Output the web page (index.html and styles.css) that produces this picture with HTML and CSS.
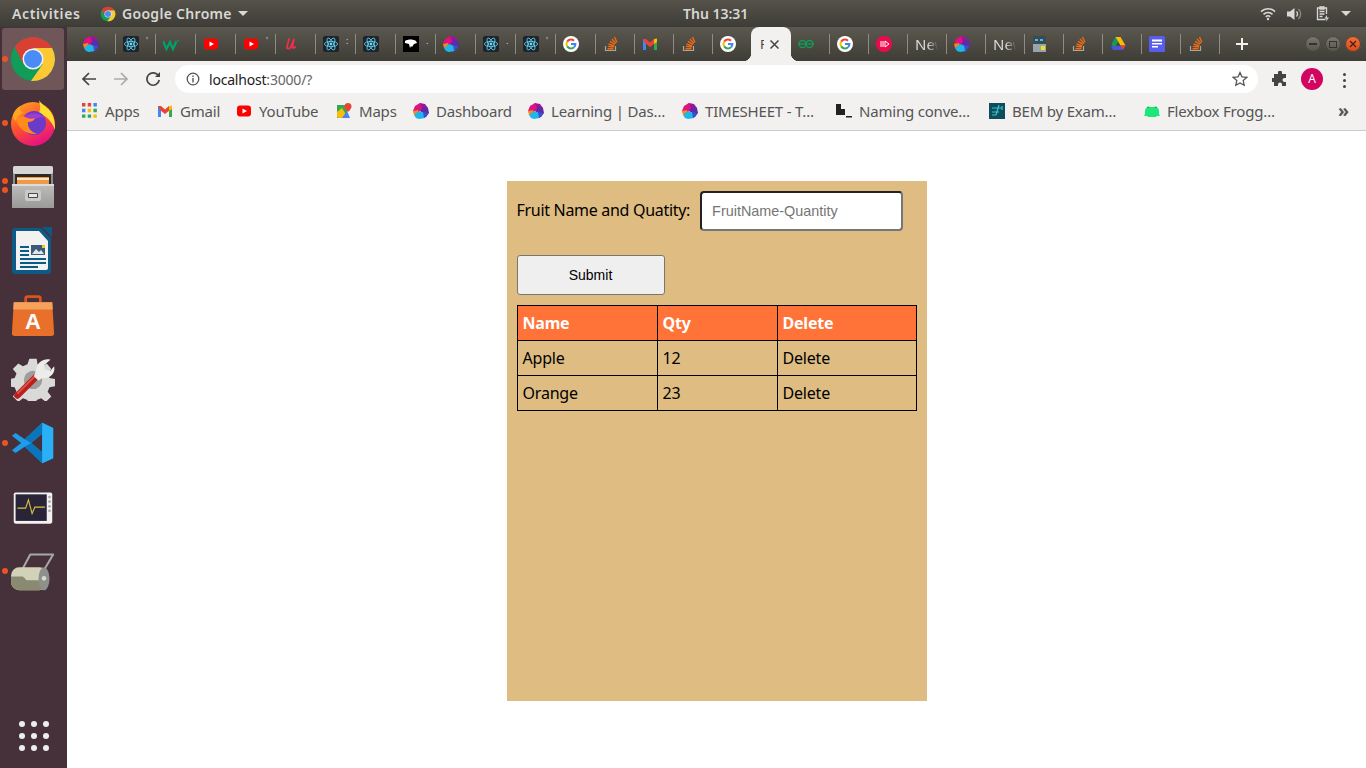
FILE: index.html
```html
<!DOCTYPE html>
<html>
<head>
  <title>Fruit list</title>
  <link rel="stylesheet" href="styles.css">
</head>
<body>
  <!-- shared favicons -->
  <svg class="sprite" width="0" height="0">
    <symbol id="gem" viewBox="0 0 16 16">
      <path fill="#a5129a" d="M7 0 12 1 15 5 15 10 8 9 4 4z"/>
      <path fill="#5a2ca8" d="M9 3 15 5 16 10 13 14 9 9z"/>
      <path fill="#e0127e" d="M2 3 7 0 9 5 6 9 0 8z"/>
      <path fill="#f7861c" d="M0 8 5 7 6 11 1 12z"/>
      <path fill="#1fb6e8" d="M1 12 6 8 11 10 12 15 6 16 3 15z"/>
      <path fill="#3a4fd0" d="M10 9 15 10 13 14 11 15z"/>
    </symbol>
    <symbol id="react" viewBox="0 0 16 16">
      <rect width="16" height="16" rx="2" fill="#20232a"/>
      <g fill="none" stroke="#61dafb" stroke-width=".8">
        <ellipse cx="8" cy="8" rx="6.6" ry="2.6"/>
        <ellipse cx="8" cy="8" rx="6.6" ry="2.6" transform="rotate(60 8 8)"/>
        <ellipse cx="8" cy="8" rx="6.6" ry="2.6" transform="rotate(120 8 8)"/>
      </g>
      <circle cx="8" cy="8" r="1.4" fill="#61dafb"/>
    </symbol>
    <symbol id="yt" viewBox="0 0 16 16">
      <rect x="1" y="2.5" width="14" height="11" rx="3" fill="#f00"/>
      <path fill="#fff" d="M6.5 5.5 11 8 6.5 10.5z"/>
    </symbol>
    <symbol id="goog" viewBox="0 0 16 16">
      <circle cx="8" cy="8" r="8" fill="#fff"/>
      <g fill="none" stroke-width="2">
        <path stroke="#ea4335" d="M4.2 5.6A4.5 4.5 0 0 1 11 4.7"/>
        <path stroke="#fbbc05" d="M4.2 10.4A4.5 4.5 0 0 1 4.2 5.6"/>
        <path stroke="#34a853" d="M11.2 11.1A4.5 4.5 0 0 1 4.2 10.4"/>
        <path stroke="#4285f4" d="M8 8H12.4A4.5 4.5 0 0 1 11.2 11.1"/>
      </g>
    </symbol>
    <symbol id="so" viewBox="0 0 16 16">
      <path fill="none" stroke="#a8a8a0" stroke-width="1.2" d="M2.5 10v4.5h10V10"/>
      <path fill="none" stroke="#f06a12" stroke-width="1.4" d="M4.5 12.8h6M4.8 10.4l6 .6M5.6 8l5.6 2M7 5.4l5 3M9 3l4 4.4M11.5 1l2.4 5.2"/>
    </symbol>
    <symbol id="gmail" viewBox="0 0 16 16">
      <path fill="#4285f4" d="M1 3h3v11H1z"/>
      <path fill="#34a853" d="M12 3h3v11h-3z"/>
      <path fill="#ea4335" d="M1 3 4 3 8 6.5 12 3 13 7 8 11 3 7z"/>
      <path fill="#fbbc05" d="M12 3 15 2.500V6l-3 2z"/>
    </symbol>
    <symbol id="chrome" viewBox="0 0 48 48">
      <circle cx="24" cy="24" r="22" fill="#0f9d58"/>
      <path fill="#fcc934" d="M43 13A22 22 0 0 1 22 46L33.500 29.500 24 13z"/>
      <path fill="#d93f33" d="M5.700 11.900A22 22 0 0 1 43 13H24L14.500 29.500z"/>
      <circle cx="24" cy="24" r="10.500" fill="#f1f1f1"/>
      <circle cx="24" cy="24" r="9" fill="#4a8cf5"/>
    </symbol>
  </svg>

  <div class="topbar">
    <div class="topbar-left">
      <span class="activities">Activities</span>
      <span class="app-menu">
        <svg class="app-menu-icon" viewBox="0 0 48 48"><use href="#chrome"/></svg>
        Google Chrome
        <i class="caret"></i>
      </span>
    </div>
    <div class="clock">Thu 13:31</div>
    <div class="tray">
      <svg class="tray-wifi" viewBox="0 0 16 14" fill="none" stroke="#d8d8d4" stroke-width="1.6">
        <path d="M1 4.600a10 10 0 0 1 14 0M3.500 7.300a6.500 6.500 0 0 1 9 0M5.800 9.800a3.200 3.200 0 0 1 4.400 0" />
        <circle cx="8" cy="12" r="1.200" fill="#d8d8d4" stroke="none"/>
      </svg>
      <svg class="tray-sound" viewBox="0 0 16 14">
        <path fill="#d8d8d4" d="M0 4.500h3L7.500 1v12L3 9.500H0z"/>
        <path fill="none" stroke="#d8d8d4" stroke-width="1.300" d="M9.500 4.500a3.500 3.500 0 0 1 0 5"/>
        <path fill="none" stroke="#8e8c85" stroke-width="1.300" d="M11.500 2a7 7 0 0 1 0 10"/>
      </svg>
      <svg class="tray-clip" viewBox="0 0 14 16" fill="none" stroke="#d8d8d4" stroke-width="1.300">
        <path d="M9.500 13.500H1.500V2h9v6"/>
        <path d="M4 1h4v2H4zM3.500 5.500h5M3.500 8h5M3.500 10.500h3"/>
        <path fill="#d8d8d4" stroke="none" d="M11 9l-2.500 3.500H10.500l-.5 3 3-4h-2z"/>
      </svg>
      <i class="caret"></i>
    </div>
  </div>

  <div class="desktop">
    <div class="dock">
      <div class="dock-item dock-active">
        <i class="pip"></i>
        <svg class="dock-icon" viewBox="0 0 48 48"><use href="#chrome"/></svg>
      </div>
      <div class="dock-item">
        <i class="pip"></i>
        <svg class="dock-icon dock-fox" viewBox="0 0 44 48">
          <defs>
            <linearGradient id="fx" x1="0" y1="0" x2=".5" y2="1">
              <stop offset="0" stop-color="#ffb01f"/>
              <stop offset=".55" stop-color="#ff4f2e"/>
              <stop offset="1" stop-color="#e8157e"/>
            </linearGradient>
          </defs>
          <circle cx="22" cy="26" r="22" fill="url(#fx)"/>
          <path fill="#ffdd2e" d="M27 0c1 6 12 9 15 18 2 5 2 10 2 14-3-9-9-14-16-17 2-5 1-10-1-15z"/>
          <path fill="#ffa51f" d="M2 17c1-4 4-7 7-9-1 3 1 6 4 7-4 1-7 4-8 8-2-1-3-3-3-6z"/>
          <circle cx="23" cy="25" r="12" fill="#6b3ac8"/>
          <path fill="#a33ad0" d="M12 20c5-6 16-6 23 0-5-2-8 0-12 1-4 1-7 1-11-1z"/>
          <path fill="#ff8b1f" d="M5 21c3-3 8-3 11-1 3 1 6 1 8 0-1 3-4 4-7 4-1 5 3 10 9 12-10 1-19-5-21-15z"/>
        </svg>
      </div>
      <div class="dock-item">
        <i class="pip pip-top"></i>
        <i class="pip pip-bottom"></i>
        <svg class="dock-icon" viewBox="0 0 44 44">
          <defs>
            <linearGradient id="drawer" x1="0" y1="0" x2="0" y2="1">
              <stop offset="0" stop-color="#bdbdbb"/>
              <stop offset="1" stop-color="#9a9a98"/>
            </linearGradient>
          </defs>
          <rect x="2" y="1" width="40" height="41" rx="2" fill="#8d8d8b"/>
          <rect x="2" y="1" width="40" height="8" rx="2" fill="#d6d6d4"/>
          <rect x="4" y="9" width="36" height="11" fill="#2d2a28"/>
          <rect x="6" y="12" width="32" height="8" fill="#ef9a46"/>
          <rect x="6" y="13" width="32" height="2" fill="#fbe3c0"/>
          <rect x="1" y="19" width="42" height="24" fill="url(#drawer)"/>
          <rect x="1" y="19" width="42" height="2" fill="#dcdcda"/>
          <rect x="14" y="25" width="16" height="11" rx="2" fill="#cacac8"/>
          <rect x="17" y="28" width="10" height="5" rx="1" fill="#4a4a48"/>
          <rect x="18" y="29" width="8" height="3" fill="#e8e8e6"/>
        </svg>
      </div>
      <div class="dock-item">
        <svg class="dock-icon dock-writer" viewBox="0 0 48 48">
          <path fill="#0e5a86" d="M6 1h26l10 10v33a3 3 0 0 1-3 3H6a3 3 0 0 1-3-3V4a3 3 0 0 1 3-3z"/>
          <path fill="#0e5a86" d="M33 0h10v10z"/>
          <path fill="#f2f2f0" d="M7 4h23l9 10v27a2 2 0 0 1-2 2H7z"/>
          <path fill="#0e5a86" d="M11 19h9v2h-9zM11 23h9v2h-9zM11 27h9v2h-9zM11 31h26v2H11zM11 35h26v2H11zM11 39h18v2H11z"/>
          <rect x="22" y="18" width="14" height="10" fill="#3d5a78"/>
          <path fill="#dfe6ea" d="M23 27l4-5 3 3 2-2 3 4z"/>
          <rect x="33" y="18" width="3" height="3" fill="#f2c230"/>
        </svg>
      </div>
      <div class="dock-item">
        <svg class="dock-icon" viewBox="0 0 48 48">
          <path fill="none" stroke="#d8541f" stroke-width="3" d="M16 12V6a2 2 0 0 1 2-2h12a2 2 0 0 1 2 2v6"/>
          <path fill="#e8702a" d="M3 10h42l2 34a3 3 0 0 1-3 3H4a3 3 0 0 1-3-3z"/>
          <path fill="#f7a25c" d="M3 10h42l.5 8H2.500z"/>
          <text class="store-a" x="24" y="39" text-anchor="middle">A</text>
        </svg>
      </div>
      <div class="dock-item">
        <svg class="dock-icon" viewBox="0 0 48 48">
          <path fill="#d9d9d7" d="M20 2h8l1 6 5 2 5-3 5 6-4 5 2 5 6 1v8l-6 1-2 5 4 5-6 6-5-4-5 2-1 6h-8l-1-6-5-2-5 4-6-6 4-5-2-5-6-1v-8l6-1 2-5-4-5 6-6 5 3 5-2z"/>
          <circle cx="24" cy="25" r="10" fill="#9d9d9b"/>
          <path fill="none" stroke="#b7211d" stroke-width="7" stroke-linecap="round" d="M7 42 30 19"/>
          <path fill="none" stroke="#e4524a" stroke-width="2" d="M7 40 28 19"/>
          <path fill="#ececea" d="M28 12c1-6 8-11 15-9l-7 6 1 5 6 1 4-5c2 8-5 14-13 13l-4 3-5-5z"/>
        </svg>
      </div>
      <div class="dock-item">
        <i class="pip"></i>
        <svg class="dock-icon" viewBox="0 0 48 48">
          <path fill="#1f9ce8" d="M34 2 46 7.500V40.500L34 46 15 28 5 35 1 32 11 24 1 16 5 13 15 20zM34 14 22 24 34 34z" fill-rule="evenodd"/>
          <path fill="#0a74bd" d="M34 2 46 7.500 34 14 22 24 15 20zM34 46 46 40.500 34 34 22 24 15 28z"/>
          <path fill="#2bb0f5" d="M34 2 46 7.500V40.500L34 46z"/>
        </svg>
      </div>
      <div class="dock-item dock-monitor">
        <svg class="dock-icon" viewBox="0 0 48 48">
          <rect x="3" y="6" width="42" height="34" rx="2" fill="#f2f2f0"/>
          <rect x="5" y="8" width="34" height="29" fill="#2a2438"/>
          <path fill="none" stroke="#d8c440" stroke-width="1.200" d="M7 23h9l3-9 4 15 3-7h11"/>
          <circle cx="42" cy="11" r="1.500" fill="#aaa"/>
          <circle cx="42" cy="16" r="1.500" fill="#aaa"/>
          <circle cx="42" cy="21" r="1.500" fill="#aaa"/>
          <circle cx="42" cy="26" r="1.500" fill="#aaa"/>
        </svg>
      </div>
      <div class="dock-item dock-roller">
        <i class="pip"></i>
        <svg class="dock-icon" viewBox="0 0 48 48">
          <path fill="none" stroke="#a8a8a3" stroke-width="2.200" stroke-linejoin="round" d="M12 23 21 6H46L36 23"/>
          <rect x="0" y="20" width="40" height="25" rx="9" fill="#d2d2b8"/>
          <path fill="#8a8a70" d="M0 30h13l4 4h18v6a5 5 0 0 1-5 5H9a9 9 0 0 1-9-9z"/>
          <ellipse cx="36" cy="32.500" rx="6" ry="12.500" fill="#8f8f8c"/>
          <circle cx="36" cy="32" r="2.500" fill="#d8d8d4"/>
        </svg>
      </div>
      <div class="dock-grid">
        <i></i><i></i><i></i><i></i><i></i><i></i><i></i><i></i><i></i>
      </div>
    </div>

    <div class="browser">
      <div class="tabstrip">
        <div class="tabs">
          <div class="tab tab-wide"><svg class="fav"><use href="#gem"/></svg></div>
          <div class="tab tab-wide"><svg class="fav"><use href="#react"/></svg><span class="tab-clip">'</span></div>
          <div class="tab tab-wide">
            <svg class="fav" viewBox="0 0 16 16"><path fill="none" stroke="#00a26b" stroke-width="2.200" d="M0 5l3.500 8L7 6l3 7 3.500-8"/><circle cx="15.300" cy="4.500" r=".8" fill="#00a26b"/></svg>
          </div>
          <div class="tab tab-wide"><svg class="fav"><use href="#yt"/></svg></div>
          <div class="tab tab-wide"><svg class="fav"><use href="#yt"/></svg><span class="tab-clip">'</span></div>
          <div class="tab tab-wide">
            <svg class="fav" viewBox="0 0 16 16"><path fill="none" stroke="#ec2f4b" stroke-width="1.800" stroke-linecap="round" d="M6 3 4 11c-.5 2 2 2 3.500.5L11 3 9.500 11c0 1.500 1.500 1 3 0"/></svg>
          </div>
          <div class="tab tab-wide"><svg class="fav"><use href="#react"/></svg><span class="tab-clip">:</span></div>
          <div class="tab tab-wide"><svg class="fav"><use href="#react"/></svg></div>
          <div class="tab tab-wide">
            <svg class="fav" viewBox="0 0 16 16"><rect width="16" height="16" fill="#000"/><path fill="#fff" d="M2 5c3-2 8-2 11 0l1 2-3 1-2 3-1-1-1 2-1-4-4-1z"/></svg>
            <span class="tab-clip">.</span>
          </div>
          <div class="tab tab-wide"><svg class="fav"><use href="#gem"/></svg></div>
          <div class="tab tab-wide"><svg class="fav"><use href="#react"/></svg><span class="tab-clip">.</span></div>
          <div class="tab tab-wide"><svg class="fav"><use href="#react"/></svg><span class="tab-clip">'</span></div>
          <div class="tab tab-wide"><svg class="fav"><use href="#goog"/></svg></div>
          <div class="tab"><svg class="fav"><use href="#so"/></svg></div>
          <div class="tab"><svg class="fav"><use href="#gmail"/></svg></div>
          <div class="tab"><svg class="fav"><use href="#so"/></svg></div>
          <div class="tab tab-plain"><svg class="fav"><use href="#goog"/></svg></div>
          <div class="tab-active">
            <span class="tab-active-title">F</span>
            <svg class="tab-close" viewBox="0 0 9 9"><path fill="none" stroke="#444" stroke-width="1.500" d="M.5.500l8 8M8.500.500l-8 8"/></svg>
          </div>
          <div class="tab">
            <svg class="fav" viewBox="0 0 16 16" fill="none" stroke="#0f9d58" stroke-width="1.300"><circle cx="4.500" cy="8" r="3.500"/><circle cx="11.500" cy="8" r="3.500"/><path d="M0 8h16"/></svg>
          </div>
          <div class="tab"><svg class="fav"><use href="#goog"/></svg></div>
          <div class="tab">
            <svg class="fav" viewBox="0 0 16 16"><circle cx="8" cy="8" r="8" fill="#ee0a4a"/><path fill="none" stroke="#fff" d="M5 5v6M7 5v6M9 5l4 3-4 3z"/></svg>
          </div>
          <div class="tab"><span class="tab-title">New</span></div>
          <div class="tab"><svg class="fav"><use href="#gem"/></svg></div>
          <div class="tab"><span class="tab-title">New</span></div>
          <div class="tab">
            <svg class="fav" viewBox="0 0 16 16"><rect x="1" width="13" height="16" fill="#9aa4ab"/><rect x="1" width="13" height="8" fill="#3d4a52"/><rect x="3" y="3" width="3" height="2" fill="#35c5f0"/><rect x="8" y="3" width="3" height="2" fill="#35c5f0"/><rect x="9" y="10" width="4" height="4" fill="#f3e021"/></svg>
          </div>
          <div class="tab"><svg class="fav"><use href="#so"/></svg></div>
          <div class="tab">
            <svg class="fav" viewBox="0 0 16 16"><path fill="#0f9d58" d="M5.500 1h5L7 7.500 4 12.500 1.500 8z"/><path fill="#fbbc05" d="M5.500 1h5l5 8.500h-5z"/><path fill="#ea4335" d="M15.500 9.500 13 14H9l1-4.500z"/><path fill="#4a55d8" d="M1 10h9.500l3 4H3z"/></svg>
          </div>
          <div class="tab">
            <svg class="fav" viewBox="0 0 16 16"><rect width="16" height="16" rx="1.500" fill="#5a5cf0"/><path fill="#fff" d="M3 3.500h10v2H3zM3 7h10v1.500H3zM3 10h6v1.500H3z"/></svg>
          </div>
          <div class="tab"><svg class="fav"><use href="#so"/></svg></div>
        </div>
        <svg class="new-tab" viewBox="0 0 12 12"><path fill="none" stroke="#f0f0ee" stroke-width="2" d="M6 0v12M0 6h12"/></svg>
        <div class="win-btns">
          <span class="win-btn"><i class="win-min"></i></span>
          <span class="win-btn"><i class="win-max"></i></span>
          <span class="win-btn win-close">
            <svg viewBox="0 0 8 8"><path fill="none" stroke="#4a1d08" stroke-width="1.300" d="M1 1l6 6M7 1 1 7"/></svg>
          </span>
        </div>
      </div>

      <div class="toolbar">
        <svg class="tool-icon" viewBox="0 0 16 16"><path fill="none" stroke="#444" stroke-width="1.700" d="M15 8H2M8 2 2 8l6 6"/></svg>
        <svg class="tool-icon tool-fwd" viewBox="0 0 16 16"><path fill="none" stroke="#aaa" stroke-width="1.700" d="M1 8h13M8 2l6 6-6 6"/></svg>
        <svg class="tool-icon" viewBox="0 0 16 16"><path fill="none" stroke="#444" stroke-width="1.700" d="M13.500 5A6.200 6.200 0 1 0 14.200 9"/><path fill="#444" d="M10 6h5V1z"/></svg>
        <div class="omnibox">
          <svg class="omni-info" viewBox="0 0 14 14"><circle cx="7" cy="7" r="5.800" fill="none" stroke="#555" stroke-width="1.300"/><path stroke="#555" stroke-width="1.400" d="M7 6v4.500M7 3.500v1.500"/></svg>
          <span class="url">localhost<span class="url-rest">:3000/?</span></span>
          <svg class="omni-star" viewBox="0 0 16 16"><path fill="none" stroke="#555" stroke-width="1.300" d="M8 1.500l2 4.400 4.800.5-3.600 3.200 1 4.700L8 11.900 3.800 14.300l1-4.700L1.200 6.400 6 5.900z"/></svg>
        </div>
        <svg class="ext-icon" viewBox="0 0 16 16"><path fill="#444" d="M6 1.500a2 2 0 0 1 4 0V3h4v4h-1.500a2 2 0 0 0 0 4H14v4H10v-1.500a2 2 0 0 0-4 0V15H2v-4H.500a2 2 0 0 1 0-4H2V3h4z"/></svg>
        <span class="avatar">A</span>
        <span class="kebab"><i></i><i></i><i></i></span>
      </div>

      <div class="bookmarks">
        <div class="bm">
          <svg class="bm-icon" viewBox="0 0 14 14">
            <path fill="#ea4335" d="M0 0h3v3H0zM5 0h3v3H5z"/><path fill="#4285f4" d="M10 0h3v3h-3zM0 5h3v3H0z"/>
            <path fill="#fbbc05" d="M5 5h3v3H5zM10 10h3v3h-3z"/><path fill="#34a853" d="M10 5h3v3h-3zM0 10h3v3H0zM5 10h3v3H5z"/>
          </svg>
          Apps
        </div>
        <div class="bm"><svg class="bm-icon"><use href="#gmail"/></svg>Gmail</div>
        <div class="bm"><svg class="bm-icon"><use href="#yt"/></svg>YouTube</div>
        <div class="bm">
          <svg class="bm-icon" viewBox="0 0 16 16">
            <path fill="#34a853" d="M1 2h10v13H1z"/><path fill="#fbbc05" d="M1 9 6 5l6 10H3l-2-1z"/><path fill="#4285f4" d="M6 15 11 8l3 7z"/>
            <path fill="#ea4335" d="M12 0a3.500 3.500 0 0 1 3.500 3.500C15.500 6 12 9 12 9S8.500 6 8.500 3.500A3.500 3.500 0 0 1 12 0z"/>
          </svg>
          Maps
        </div>
        <div class="bm"><svg class="bm-icon"><use href="#gem"/></svg>Dashboard</div>
        <div class="bm"><svg class="bm-icon"><use href="#gem"/></svg>Learning | Das…</div>
        <div class="bm"><svg class="bm-icon"><use href="#gem"/></svg>TIMESHEET - T…</div>
        <div class="bm">
          <svg class="bm-icon" viewBox="0 0 16 16"><path fill="#222" d="M0 1h5v5h4v6H0zM10 13h6v1.500h-6z"/></svg>
          Naming conve…
        </div>
        <div class="bm">
          <svg class="bm-icon" viewBox="0 0 16 16"><rect width="16" height="16" fill="#0f4c5c"/><path fill="none" stroke="#35c5c9" stroke-width="1.200" d="M3 5h10M3 9h7M3 12h4M10 2 7 12M13 3v4"/></svg>
          BEM by Exam…
        </div>
        <div class="bm">
          <svg class="bm-icon" viewBox="0 0 16 16"><path fill="#1fe67a" d="M1 8c0-2 1-3 2-3.500a2 2 0 0 1 3-.5h4a2 2 0 0 1 3 .5C14 5 15 6 15 8v3l1 2h-3l-1 1H4l-1-1H0l1-2z"/><path fill="#0a7a3e" d="M3.500 4h1v1h-1zM11.500 4h1v1h-1z"/></svg>
          Flexbox Frogg…
        </div>
        <div class="bm-more">»</div>
      </div>

      <div class="page">
        <div class="fruit-app">
          <form class="fruit-form">
            <div class="fruit-row">
              <label class="fruit-label">Fruit Name and Quatity:</label>
              <input class="fruit-input" type="text" placeholder="FruitName-Quantity">
            </div>
            <button class="fruit-submit" type="button">Submit</button>
          </form>
          <table class="fruit-table">
            <thead>
              <tr><th class="col-name">Name</th><th class="col-qty">Qty</th><th>Delete</th></tr>
            </thead>
            <tbody>
              <tr><td>Apple</td><td>12</td><td>Delete</td></tr>
              <tr><td>Orange</td><td>23</td><td>Delete</td></tr>
            </tbody>
          </table>
        </div>
      </div>
    </div>
  </div>
</body>
</html>
```

FILE: styles.css
```css
html, body {
  margin: 0;
  height: 100%;
  overflow: hidden;
}
body {
  display: flex;
  flex-direction: column;
  font-family: "Noto Sans", "Open Sans", sans-serif;
  background: #fff;
}
.sprite {
  position: absolute;
}
i {
  display: block;
}

/* top bar */
.topbar {
  height: 27px;
  flex: none;
  display: grid;
  grid-template-columns: 683px auto 1fr;
  align-items: center;
  background: linear-gradient(#55524a, #3d3c36);
  color: #d8d8d4;
  font-size: 14px;
  font-weight: 600;
}
.topbar-left {
  display: flex;
  align-items: center;
  padding-left: 12px;
}
.activities {
  width: 88px;
  letter-spacing: .6px;
}
.app-menu {
  display: flex;
  align-items: center;
  letter-spacing: .3px;
}
.app-menu-icon {
  width: 16px;
  height: 16px;
  margin-right: 6px;
}
.caret {
  width: 0;
  height: 0;
  border: 5px solid transparent;
  border-top: 5px solid #d8d8d4;
  border-bottom: 0;
}
.app-menu .caret {
  margin-left: 6px;
}
.tray {
  display: flex;
  align-items: center;
  justify-content: flex-end;
  padding-right: 15px;
}
.tray-wifi {
  width: 16px;
  height: 14px;
  margin-right: 11px;
}
.tray-sound {
  width: 16px;
  height: 14px;
  margin-right: 13px;
}
.tray-clip {
  width: 14px;
  height: 16px;
  margin-right: 11px;
}

.desktop {
  flex: 1;
  display: flex;
  min-height: 0;
}

/* dock */
.dock {
  width: 67px;
  flex: none;
  display: flex;
  flex-direction: column;
  background: #46303a;
}
.dock-item {
  height: 64px;
  position: relative;
  display: flex;
  align-items: center;
  justify-content: center;
  flex: none;
  margin-right: 1px;
}
.dock-item:first-child {
  margin-top: 1px;
  height: 62px;
  margin-bottom: 1px;
}
.dock-active {
  margin-left: 2px;
  margin-right: 3px;
  background: #6e5659;
  border-radius: 3px;
}
.dock-icon {
  width: 44px;
  height: 44px;
}
.dock-active .dock-icon,
.dock-writer {
  width: 48px;
  height: 48px;
}
.dock-fox {
  height: 48px;
  margin-top: -2px;
}
.dock-monitor .dock-icon {
  margin-top: 4px;
}
.pip {
  position: absolute;
  left: 2px;
  top: 29px;
  width: 6px;
  height: 6px;
  border-radius: 50%;
  background: #e95420;
}
.dock-active .pip {
  left: 0;
  top: 28px;
}
.pip-top {
  top: 23px;
}
.pip-bottom {
  top: 32px;
}
.dock-grid {
  margin-top: auto;
  margin-bottom: 17px;
  align-self: center;
  display: grid;
  grid-template-columns: repeat(3, 6px);
  gap: 6px;
}
.dock-grid i {
  width: 6px;
  height: 6px;
  border-radius: 50%;
  background: #eee;
}
.store-a {
  font-family: "Liberation Sans", sans-serif;
  font-weight: 700;
  font-size: 24px;
  fill: #fff;
}

/* browser chrome */
.browser {
  flex: 1;
  min-width: 0;
  display: flex;
  flex-direction: column;
}
.tabstrip {
  height: 34px;
  flex: none;
  display: flex;
  align-items: stretch;
  padding-left: 9px;
  background: linear-gradient(#5b584f, #3e3d36);
}
.tabs {
  display: flex;
  align-items: stretch;
}
.tab {
  width: 39px;
  box-sizing: border-box;
  position: relative;
  display: flex;
  align-items: center;
  padding-left: 7px;
  flex: none;
}
.tab::after {
  content: "";
  position: absolute;
  right: 0;
  top: 7px;
  bottom: 7px;
  width: 1px;
  background: #8e8c84;
}
.tab-wide {
  width: 40px;
}
.tab-plain {
  width: 38px;
}
.tab-plain::after {
  display: none;
}
.fav {
  width: 16px;
  height: 16px;
  flex: none;
}
.tab-clip {
  margin-left: 7px;
  margin-top: -8px;
  font-size: 9px;
  color: #d8d8d4;
}
.tab-title {
  width: 23px;
  overflow: hidden;
  font-size: 15px;
  color: #d9d9d5;
  white-space: nowrap;
  -webkit-mask-image: linear-gradient(90deg, #000 55%, transparent);
  mask-image: linear-gradient(90deg, #000 55%, transparent);
}
.tab-active {
  width: 40px;
  flex: none;
  position: relative;
  box-sizing: border-box;
  background: #f2f1f0;
  border-radius: 8px 8px 0 0;
  display: flex;
  align-items: center;
  padding-left: 9px;
  color: #444;
  font-size: 13px;
}
.tab-active::before,
.tab-active::after {
  content: "";
  position: absolute;
  bottom: 0;
  width: 8px;
  height: 8px;
}
.tab-active::before {
  left: -8px;
  background: radial-gradient(circle at 0 0, transparent 8px, #f2f1f0 8.5px);
}
.tab-active::after {
  right: -8px;
  background: radial-gradient(circle at 100% 0, transparent 8px, #f2f1f0 8.5px);
}
.tab-active-title {
  width: 4px;
  overflow: hidden;
}
.tab-close {
  width: 9px;
  height: 9px;
  margin-left: 6px;
}
.new-tab {
  width: 12px;
  height: 12px;
  margin: 11px 0 0 16px;
  flex: none;
}
.win-btns {
  margin-left: auto;
  display: flex;
  align-items: center;
  gap: 4px;
  padding-right: 5px;
}
.win-btn {
  width: 16px;
  height: 16px;
  border-radius: 50%;
  display: flex;
  align-items: center;
  justify-content: center;
  background: linear-gradient(#7b7a72, #55544c);
  box-shadow: inset 0 0 0 1px #44433d;
}
.win-min {
  width: 8px;
  height: 2px;
  background: #33322d;
}
.win-max {
  width: 6px;
  height: 5px;
  border: 1px solid #33322d;
}
.win-close {
  background: linear-gradient(#f4703a, #d9481a);
}
.win-close svg {
  width: 8px;
  height: 8px;
}

.toolbar {
  height: 33px;
  flex: none;
  box-sizing: border-box;
  display: flex;
  align-items: flex-start;
  padding-top: 4px;
  background: #f2f1f0;
}
.tool-icon {
  width: 16px;
  height: 16px;
  margin: 6px 16px 0 0;
  flex: none;
}
.tool-icon:first-child {
  margin-left: 14px;
}
.omnibox {
  width: 1083px;
  height: 28px;
  margin-left: -2px;
  flex: none;
  display: flex;
  align-items: center;
  border-radius: 14px;
  background: #fff;
  padding: 0 10px 0 11px;
  box-sizing: border-box;
}
.omni-info {
  width: 14px;
  height: 14px;
  flex: none;
}
.url {
  margin-left: 9px;
  font-size: 14px;
  letter-spacing: -.2px;
  color: #222;
}
.url-rest {
  color: #666;
}
.omni-star {
  margin-left: auto;
  width: 16px;
  height: 16px;
}
.ext-icon {
  width: 16px;
  height: 16px;
  margin: 6px 0 0 14px;
  flex: none;
}
.avatar {
  width: 22px;
  height: 22px;
  margin: 3px 0 0 13px;
  flex: none;
  border-radius: 50%;
  background: #d1045f;
  color: #fff;
  font-size: 12px;
  line-height: 22px;
  text-align: center;
}
.kebab {
  margin: 8px 0 0 20px;
  display: flex;
  flex-direction: column;
  gap: 3px;
}
.kebab i {
  width: 3px;
  height: 3px;
  border-radius: 50%;
  background: #444;
}

.bookmarks {
  height: 37px;
  flex: none;
  box-sizing: border-box;
  display: grid;
  grid-template-columns: 75px 79px 100px 77px 115px 154px 154px 153px 155px 194px 1fr;
  align-items: center;
  padding: 0 0 2px 15px;
  background: #f2f1f0;
  border-bottom: 1px solid #ccc;
  color: #555;
  font-size: 15px;
  letter-spacing: -.2px;
}
.bm {
  display: flex;
  align-items: center;
  white-space: nowrap;
  overflow: hidden;
}
.bm-icon {
  width: 16px;
  height: 16px;
  margin-right: 7px;
  flex: none;
}
.bm-more {
  font-size: 18px;
  font-weight: 700;
  line-height: 18px;
  margin-top: -3px;
}

/* the fruit page */
.page {
  flex: 1;
  background: #fff;
}
.fruit-app {
  width: 420px;
  height: 520px;
  box-sizing: border-box;
  margin: 50px auto 0;
  padding: 10px;
  background: #dfbc82;
}
.fruit-row {
  display: flex;
  align-items: center;
}
.fruit-label {
  font-size: 16px;
  letter-spacing: -.3px;
  color: #000;
  margin-right: 10px;
  padding-bottom: 2px;
}
.fruit-input {
  width: 203px;
  height: 40px;
  box-sizing: border-box;
  padding: 0 10px 1px;
  border: 2px solid;
  border-color: #222 #767676 #767676 #222;
  border-radius: 4px;
  background: #fff;
  font: 14.4px "Liberation Sans", sans-serif;
}
.fruit-input::placeholder {
  color: #757575;
}
.fruit-submit {
  display: block;
  width: 148px;
  height: 40px;
  margin-top: 24px;
  padding: 0 0 1px;
  box-sizing: border-box;
  background: #efefef;
  border: 1px solid #767676;
  border-radius: 3px;
  color: #000;
  font: 14px "Liberation Sans", sans-serif;
}
.fruit-table {
  width: 400px;
  margin-top: 10px;
  border-collapse: collapse;
  table-layout: fixed;
  font-size: 16px;
  letter-spacing: -.2px;
  color: #000;
}
.fruit-table th,
.fruit-table td {
  height: 35px;
  box-sizing: border-box;
  padding: 0 5px;
  border: 1px solid #000;
  text-align: left;
}
.fruit-table th {
  background: #ff7339;
  color: #fff;
  font-weight: 700;
}
.col-name {
  width: 140px;
}
.col-qty {
  width: 120px;
}
```
